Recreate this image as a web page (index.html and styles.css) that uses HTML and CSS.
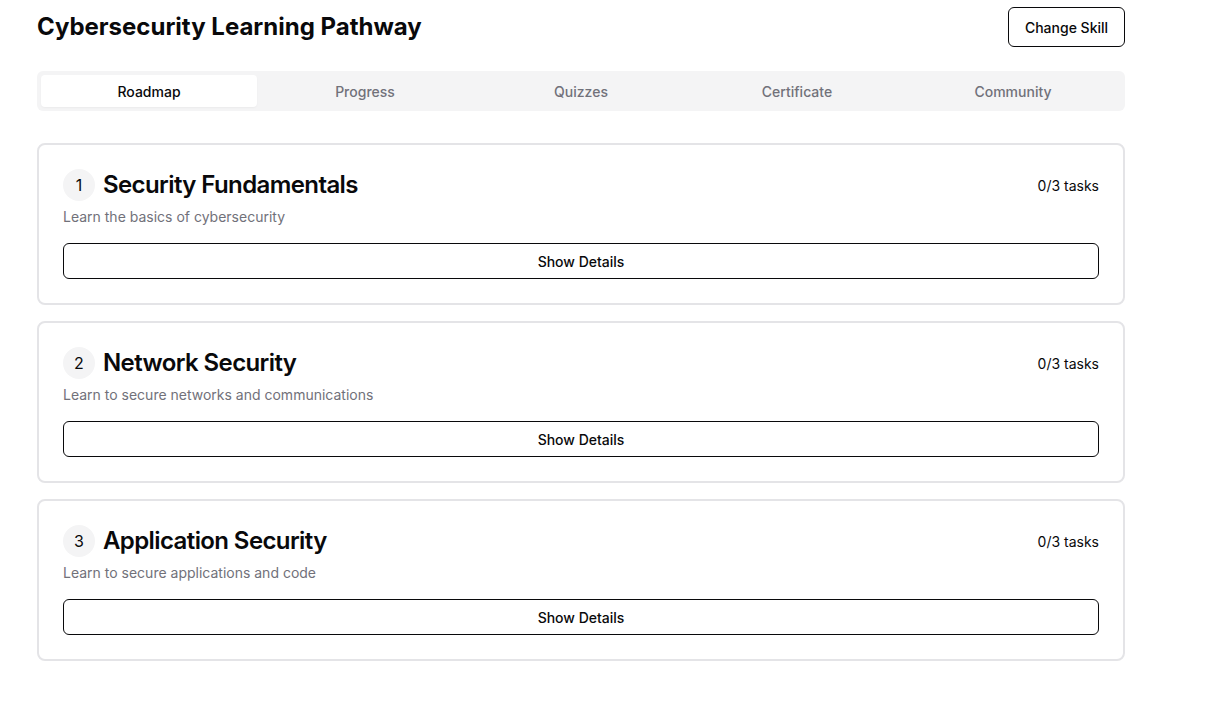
FILE: index.html
```html
<!DOCTYPE html>
<html>
<head>
<meta charset="utf-8">
<link rel="stylesheet" href="styles.css">
</head>
<body>
<div class="page">
  <header class="header">
    <h1 class="title">Cybersecurity Learning Pathway</h1>
    <button class="btn-outline">Change Skill</button>
  </header>
  <nav class="tabs">
    <div class="tab active">Roadmap</div>
    <div class="tab">Progress</div>
    <div class="tab">Quizzes</div>
    <div class="tab">Certificate</div>
    <div class="tab">Community</div>
  </nav>
  <main class="cards">
    <section class="card">
      <div class="card-head">
        <div class="card-title-wrap">
          <span class="num">1</span>
          <h2 class="card-title">Security Fundamentals</h2>
        </div>
        <span class="tasks">0/3 tasks</span>
      </div>
      <p class="desc">Learn the basics of cybersecurity</p>
      <button class="details">Show Details</button>
    </section>
    <section class="card">
      <div class="card-head">
        <div class="card-title-wrap">
          <span class="num">2</span>
          <h2 class="card-title">Network Security</h2>
        </div>
        <span class="tasks">0/3 tasks</span>
      </div>
      <p class="desc">Learn to secure networks and communications</p>
      <button class="details">Show Details</button>
    </section>
    <section class="card">
      <div class="card-head">
        <div class="card-title-wrap">
          <span class="num">3</span>
          <h2 class="card-title">Application Security</h2>
        </div>
        <span class="tasks">0/3 tasks</span>
      </div>
      <p class="desc">Learn to secure applications and code</p>
      <button class="details">Show Details</button>
    </section>
  </main>
</div>
</body>
</html>
```

FILE: styles.css
```css
* { box-sizing: border-box; }
html, body { margin: 0; padding: 0; background: #fff; }
body {
  font-family: Inter, "Noto Sans", "Liberation Sans", sans-serif;
  color: #09090b;
}
.page {
  width: 1088px;
  margin-left: 37px;
  padding-top: 7px;
}
.header {
  display: flex;
  justify-content: space-between;
  align-items: center;
  height: 40px;
}
.title {
  margin: 0;
  font-size: 24px;
  font-weight: 700;
  line-height: 40px;
}
.btn-outline {
  font-family: inherit;
  height: 40px;
  width: 117px;
  background: #fff;
  border: 1px solid #09090b;
  border-radius: 6px;
  font-size: 14px;
  font-weight: 500;
  color: #09090b;
  padding: 0;
}
.tabs {
  margin-top: 24px;
  height: 40px;
  background: #f4f4f5;
  border-radius: 6px;
  padding: 4px;
  display: grid;
  grid-template-columns: repeat(5, 1fr);
}
.tab {
  display: flex;
  align-items: center;
  justify-content: center;
  font-size: 14px;
  font-weight: 500;
  color: #71717a;
  border-radius: 4px;
}
.tab.active {
  background: #fff;
  color: #09090b;
  box-shadow: 0 1px 2px rgba(0,0,0,0.04);
}
.cards {
  margin-top: 32px;
  display: flex;
  flex-direction: column;
  gap: 16px;
}
.card {
  border: 2px solid #e4e4e7;
  border-radius: 8px;
  padding: 24px;
  background: #fff;
}
.card-head {
  display: flex;
  justify-content: space-between;
  align-items: center;
  height: 32px;
}
.card-title-wrap {
  display: flex;
  align-items: center;
  gap: 8px;
}
.num {
  width: 32px;
  height: 32px;
  border-radius: 50%;
  background: #f4f4f5;
  display: flex;
  align-items: center;
  justify-content: center;
  font-size: 16px;
}
.card-title {
  margin: 0;
  font-size: 24px;
  font-weight: 600;
  line-height: 32px;
  letter-spacing: -0.6px;
}
.tasks {
  font-size: 14px;
}
.desc {
  margin: 6px 0 0;
  font-size: 14px;
  line-height: 20px;
  color: #71717a;
}
.details {
  font-family: inherit;
  display: block;
  width: 100%;
  height: 36px;
  margin-top: 16px;
  background: #fff;
  border: 1px solid #09090b;
  border-radius: 6px;
  font-size: 14px;
  font-weight: 500;
  color: #09090b;
}
```
